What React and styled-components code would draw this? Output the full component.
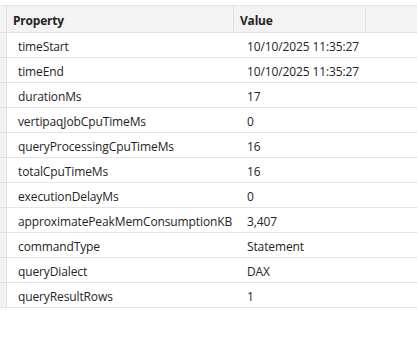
import React from 'react';
import styled, { createGlobalStyle } from 'styled-components';

const GlobalStyle = createGlobalStyle`
  html, body {
    margin: 0;
    padding: 0;
    background: #ffffff;
  }
  body {
    font-family: "Open Sans", "Noto Sans", "Liberation Sans", sans-serif;
    color: #252423;
  }
`;

const rows = [
  ['timeStart', '10/10/2025 11:35:27'],
  ['timeEnd', '10/10/2025 11:35:27'],
  ['durationMs', '17'],
  ['vertipaqJobCpuTimeMs', '0'],
  ['queryProcessingCpuTimeMs', '16'],
  ['totalCpuTimeMs', '16'],
  ['executionDelayMs', '0'],
  ['approximatePeakMemConsumptionKB', '3,407'],
  ['commandType', 'Statement'],
  ['queryDialect', 'DAX'],
  ['queryResultRows', '1'],
];

const Page = styled.div`
  width: 417px;
  height: 343px;
  padding-top: 5px;
  box-sizing: border-box;
  overflow: hidden;
`;

const Grid = styled.div`
  display: grid;
  grid-template-columns: 7px 227px 132px 1fr;
  border-top: 1px solid #e6e6e6;
`;

const Selector = styled.div`
  height: ${(p) => p.h}px;
  background: #f3f3f3;
  border-right: 1px solid #e1e1e1;
  border-bottom: 1px solid #e1e1e1;
  box-sizing: border-box;
`;

const HeadCell = styled.div`
  height: 27px;
  box-sizing: border-box;
  background: #f3f3f3;
  border-right: ${(p) => (p.last ? 'none' : '1px solid #e1e1e1')};
  border-bottom: 1px solid #e1e1e1;
  display: flex;
  align-items: center;
  padding: 2px 0 0 6px;
  font-size: 12px;
  font-weight: 700;
  letter-spacing: -0.2px;
`;

const Cell = styled.div`
  height: 25px;
  box-sizing: border-box;
  border-bottom: 1px solid #e4e4e4;
  display: flex;
  align-items: center;
  padding: 2px 0 0 ${(p) => p.pad}px;
  font-size: 12px;
  letter-spacing: -0.12px;
  white-space: nowrap;
  overflow: hidden;
`;

export default function App() {
  return (
    <Page>
      <GlobalStyle />
      <Grid>
        <Selector h={27} />
        <HeadCell>Property</HeadCell>
        <HeadCell>Value</HeadCell>
        <HeadCell last />
        {rows.map(([name, value]) => (
          <React.Fragment key={name}>
            <Selector h={25} />
            <Cell pad={11}>{name}</Cell>
            <Cell pad={13}>{value}</Cell>
            <Cell />
          </React.Fragment>
        ))}
      </Grid>
    </Page>
  );
}
